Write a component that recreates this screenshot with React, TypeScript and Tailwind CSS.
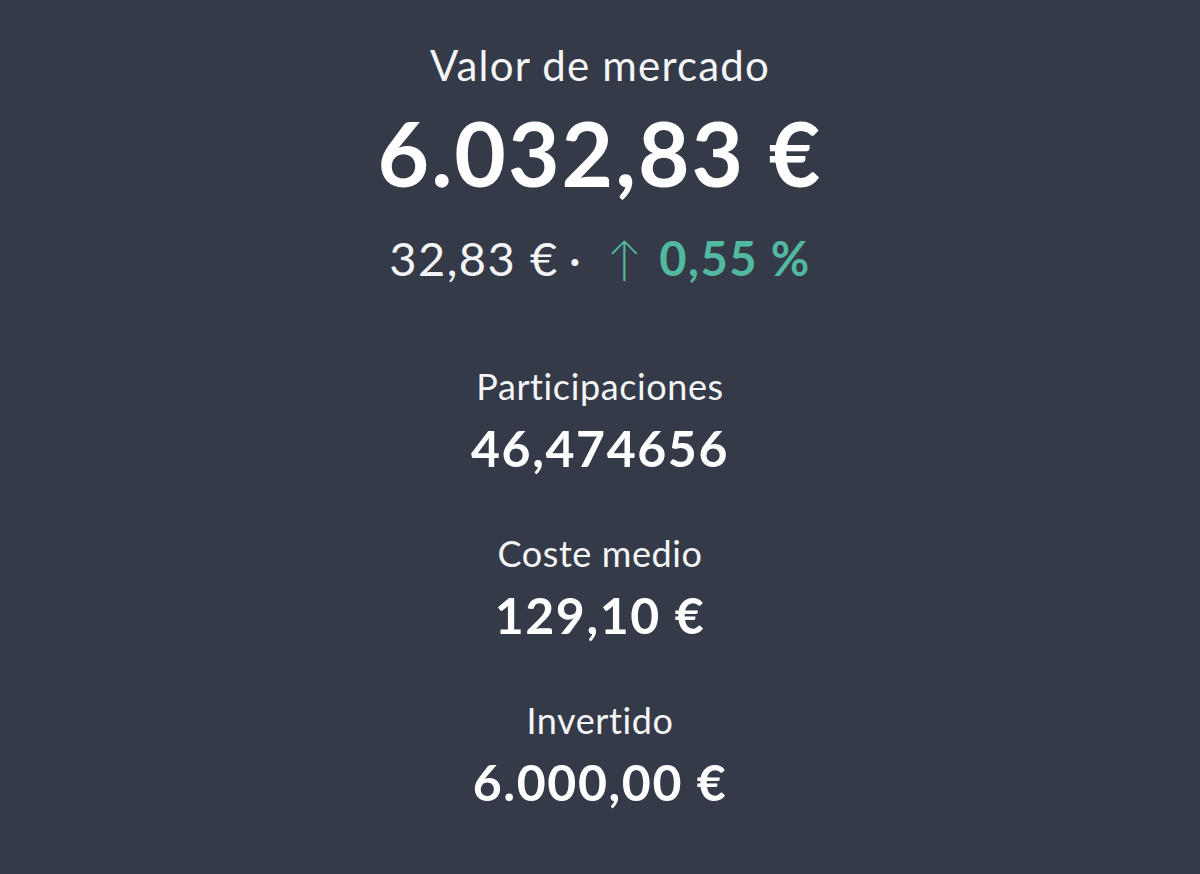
import React from "react";

function Stat({ label, value }: { label: string; value: string }) {
  return (
    <div className="flex flex-col items-center">
      <div className="text-[36px] leading-[42px] text-[#f4f5f7] tracking-[0.6px]">{label}</div>
      <div className="mt-[10px] text-[50px] leading-[62px] font-bold text-white tracking-[1.6px]">{value}</div>
    </div>
  );
}

export default function App() {
  return (
    <div
      className="w-[1200px] h-[874px] bg-[#343a48] flex flex-col items-center text-white"
      style={{ fontFamily: "Lato, 'Open Sans', sans-serif" }}
    >
      <div className="mt-[38px] text-[42px] leading-[54px] text-[#f4f5f7] tracking-[1.2px]">Valor de mercado</div>
      <div className="mt-[6px] text-[89px] leading-[110px] font-bold tracking-[2px]">6.032,83 €</div>
      <div className="mt-[20px] text-[47px] leading-[60px] flex items-center tracking-[1.5px]">
        <span className="text-[#f4f5f7]">32,83 €</span>
        <span className="ml-[10px] text-[#f4f5f7]">·</span>
        <span className="ml-[24px] text-[#52b9a0] font-light">↑</span>
        <span className="ml-[16px] text-[#52b9a0] font-bold">0,55 %</span>
      </div>
      <div className="mt-[77px] flex flex-col gap-[53px]">
        <Stat label="Participaciones" value="46,474656" />
        <Stat label="Coste medio" value="129,10 €" />
        <Stat label="Invertido" value="6.000,00 €" />
      </div>
    </div>
  );
}
